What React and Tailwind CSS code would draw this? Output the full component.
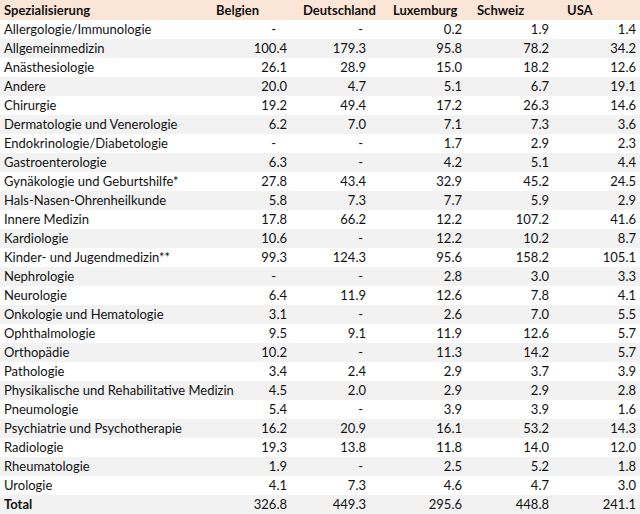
import React from 'react'

// Fachärzte je 100'000 Einwohner nach Spezialisierung
const ROWS = [
  ['Allergologie/Immunologie', '-', '-', '0.2', '1.9', '1.4'],
  ['Allgemeinmedizin', '100.4', '179.3', '95.8', '78.2', '34.2'],
  ['Anästhesiologie', '26.1', '28.9', '15.0', '18.2', '12.6'],
  ['Andere', '20.0', '4.7', '5.1', '6.7', '19.1'],
  ['Chirurgie', '19.2', '49.4', '17.2', '26.3', '14.6'],
  ['Dermatologie und Venerologie', '6.2', '7.0', '7.1', '7.3', '3.6'],
  ['Endokrinologie/Diabetologie', '-', '-', '1.7', '2.9', '2.3'],
  ['Gastroenterologie', '6.3', '-', '4.2', '5.1', '4.4'],
  ['Gynäkologie und Geburtshilfe*', '27.8', '43.4', '32.9', '45.2', '24.5'],
  ['Hals-Nasen-Ohrenheilkunde', '5.8', '7.3', '7.7', '5.9', '2.9'],
  ['Innere Medizin', '17.8', '66.2', '12.2', '107.2', '41.6'],
  ['Kardiologie', '10.6', '-', '12.2', '10.2', '8.7'],
  ['Kinder- und Jugendmedizin**', '99.3', '124.3', '95.6', '158.2', '105.1'],
  ['Nephrologie', '-', '-', '2.8', '3.0', '3.3'],
  ['Neurologie', '6.4', '11.9', '12.6', '7.8', '4.1'],
  ['Onkologie und Hematologie', '3.1', '-', '2.6', '7.0', '5.5'],
  ['Ophthalmologie', '9.5', '9.1', '11.9', '12.6', '5.7'],
  ['Orthopädie', '10.2', '-', '11.3', '14.2', '5.7'],
  ['Pathologie', '3.4', '2.4', '2.9', '3.7', '3.9'],
  ['Physikalische und Rehabilitative Medizin', '4.5', '2.0', '2.9', '2.9', '2.8'],
  ['Pneumologie', '5.4', '-', '3.9', '3.9', '1.6'],
  ['Psychiatrie und Psychotherapie', '16.2', '20.9', '16.1', '53.2', '14.3'],
  ['Radiologie', '19.3', '13.8', '11.8', '14.0', '12.0'],
  ['Rheumatologie', '1.9', '-', '2.5', '5.2', '1.8'],
  ['Urologie', '4.1', '7.3', '4.6', '4.7', '3.0'],
]

const TOTAL = ['Total', '326.8', '449.3', '295.6', '448.8', '241.1']

// Spalten: Breite, Kopf-Einzug links, Zahl-Einzug rechts, Strich-Einzug rechts
const COLS = [
  { w: 'w-[90px]', head: 'pl-[16px]', num: 'pr-[3px]', dash: 'pr-[14px]' },
  { w: 'w-[80px]', head: 'pl-[13px]', num: 'pr-[4px]', dash: 'pr-[7px]' },
  { w: 'w-[95px]', head: 'pl-[23px]', num: 'pr-[3px]', dash: 'pr-[7px]' },
  { w: 'w-[87px]', head: 'pl-[12px]', num: 'pr-[3px]', dash: 'pr-[7px]' },
  { w: 'w-[88px]', head: 'pl-[15px]', num: 'pr-[4px]', dash: 'pr-[7px]' },
]

function Row({ cells, shaded, bold }) {
  return (
    <div className={`flex h-[19px] items-center ${shaded ? 'bg-[#f2f2f2]' : 'bg-white'} ${bold ? 'font-bold' : ''}`}>
      <div className="w-[200px] pl-[4px] whitespace-nowrap">{cells[0]}</div>
      {cells.slice(1).map((v, i) => (
        <div key={i} className={`${COLS[i].w} text-right ${v === '-' ? COLS[i].dash : COLS[i].num} ${bold ? 'font-normal' : ''}`}>{v}</div>
      ))}
    </div>
  )
}

export default function App() {
  return (
    <div className="w-[640px] h-[514px] bg-white text-[#111] text-[13px] leading-none overflow-hidden" style={{ fontFamily: 'Lato, "Open Sans", sans-serif' }}>
      <div className="flex h-[20px] items-center bg-[#fbe5d6] font-bold">
        <div className="w-[200px] pl-[4px]">Spezialisierung</div>
        {['Belgien', 'Deutschland', 'Luxemburg', 'Schweiz', 'USA'].map((h, i) => (
          <div key={h} className={`${COLS[i].w} ${COLS[i].head}`}>{h}</div>
        ))}
      </div>
      {ROWS.map((r, i) => <Row key={r[0]} cells={r} shaded={i % 2 === 1} />)}
      <Row cells={TOTAL} shaded bold />
    </div>
  )
}
